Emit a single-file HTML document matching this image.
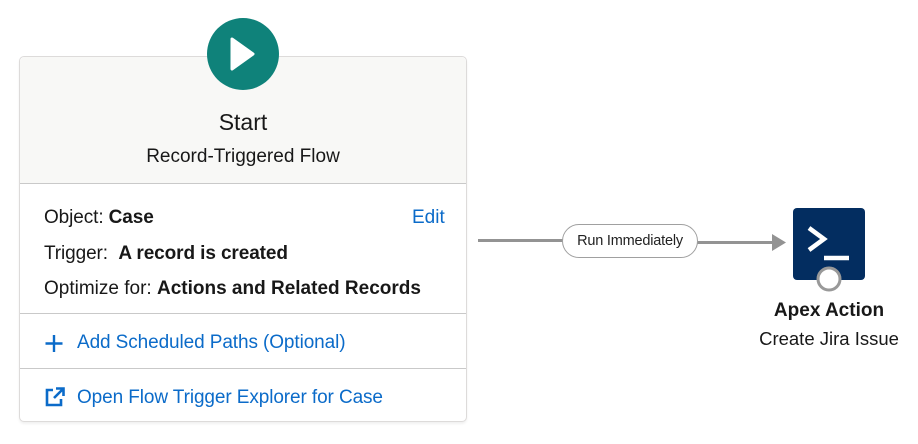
<!DOCTYPE html>
<html><head><meta charset="utf-8"><style>
body{margin:0;width:918px;height:444px;background:#fff;font-family:"Liberation Sans",sans-serif;color:#181818;position:relative;overflow:hidden}
.a{position:absolute;white-space:nowrap}
.card{position:absolute;left:19px;top:56px;width:446px;height:364px;border:1px solid #dddbda;border-radius:5px;background:#fff;box-shadow:0 2px 2px rgba(0,0,0,.06)}
.hdr{position:absolute;left:0;top:0;width:446px;height:126px;background:#f8f8f6;border-bottom:1px solid #c9c9c9;border-radius:5px 5px 0 0}
.div{position:absolute;left:0;width:446px;height:1px;background:#c9c9c9}
.lnk{color:#0b6bc9}
</style></head><body>
<div class="card">
 <div class="hdr"></div>
 <div class="div" style="top:256px"></div>
 <div class="div" style="top:311px"></div>
</div>
<svg class="a" style="left:207px;top:18px" width="72" height="72"><circle cx="36" cy="36" r="36" fill="#0f827a"/><path d="M25 21 L46 36 L25 51Z" fill="#fff" stroke="#fff" stroke-width="3" stroke-linejoin="round"/></svg>
<div class="a" style="left:19px;width:448px;text-align:center;top:109px;font-size:23px">Start</div>
<div class="a" style="left:19px;width:448px;text-align:center;top:146px;font-size:19px">Record-Triggered Flow</div>
<div class="a" style="left:44px;top:207px;font-size:19px;letter-spacing:-0.1px">Object: <b>Case</b></div>
<div class="a lnk" style="left:412px;top:207px;font-size:19px">Edit</div>
<div class="a" style="left:44px;top:243px;font-size:19px;letter-spacing:-0.1px">Trigger:&nbsp; <b>A record is created</b></div>
<div class="a" style="left:44px;top:278px;font-size:19px;letter-spacing:0px">Optimize for: <b>Actions and Related Records</b></div>
<svg class="a" style="left:44px;top:333px" width="20" height="20"><path d="M10 2V19M1.5 10.5H18.5" stroke="#0b6bc9" stroke-width="2.4"/></svg>
<div class="a lnk" style="left:77px;top:332px;font-size:19px;letter-spacing:-0.1px">Add Scheduled Paths (Optional)</div>
<svg class="a" style="left:44px;top:386px" width="22" height="22"><path d="M9 4H3V19H17V13" fill="none" stroke="#0b6bc9" stroke-width="2.6"/><path d="M10 12L19 3M12 2.5H19.5V10" fill="none" stroke="#0b6bc9" stroke-width="2.6"/></svg>
<div class="a lnk" style="left:77px;top:387px;font-size:19px;letter-spacing:-0.1px">Open Flow Trigger Explorer for Case</div>
<div class="a" style="left:478px;top:239px;width:86px;height:3px;background:#939393"></div>
<div class="a" style="left:696px;top:241px;width:78px;height:3px;background:#939393"></div>
<svg class="a" style="left:772px;top:234px" width="14" height="17"><path d="M0 0L14 8.5L0 17Z" fill="#939393"/></svg>
<div class="a" style="left:562px;top:224px;width:134px;height:32px;border:1px solid #a0a0a0;border-radius:17px;background:#fff;font-size:14.5px;text-align:center;line-height:32px;color:#222;letter-spacing:-0.2px">Run Immediately</div>
<div class="a" style="left:793px;top:208px;width:72px;height:72px;background:#032d60;border-radius:4px"></div>
<svg class="a" style="left:793px;top:208px" width="72" height="72"><path d="M16 20L31 31L16 42" fill="none" stroke="#fff" stroke-width="4.5"/><path d="M31 50H56" stroke="#fff" stroke-width="4.5"/></svg>
<svg class="a" style="left:815px;top:265px" width="28" height="28"><circle cx="14" cy="14" r="11" fill="#fff" stroke="#999" stroke-width="3"/></svg>
<div class="a" style="left:729px;width:200px;text-align:center;top:300px;font-size:19px;font-weight:bold">Apex Action</div>
<div class="a" style="left:729px;width:200px;text-align:center;top:328px;font-size:18.5px">Create Jira Issue</div>
</body></html>
